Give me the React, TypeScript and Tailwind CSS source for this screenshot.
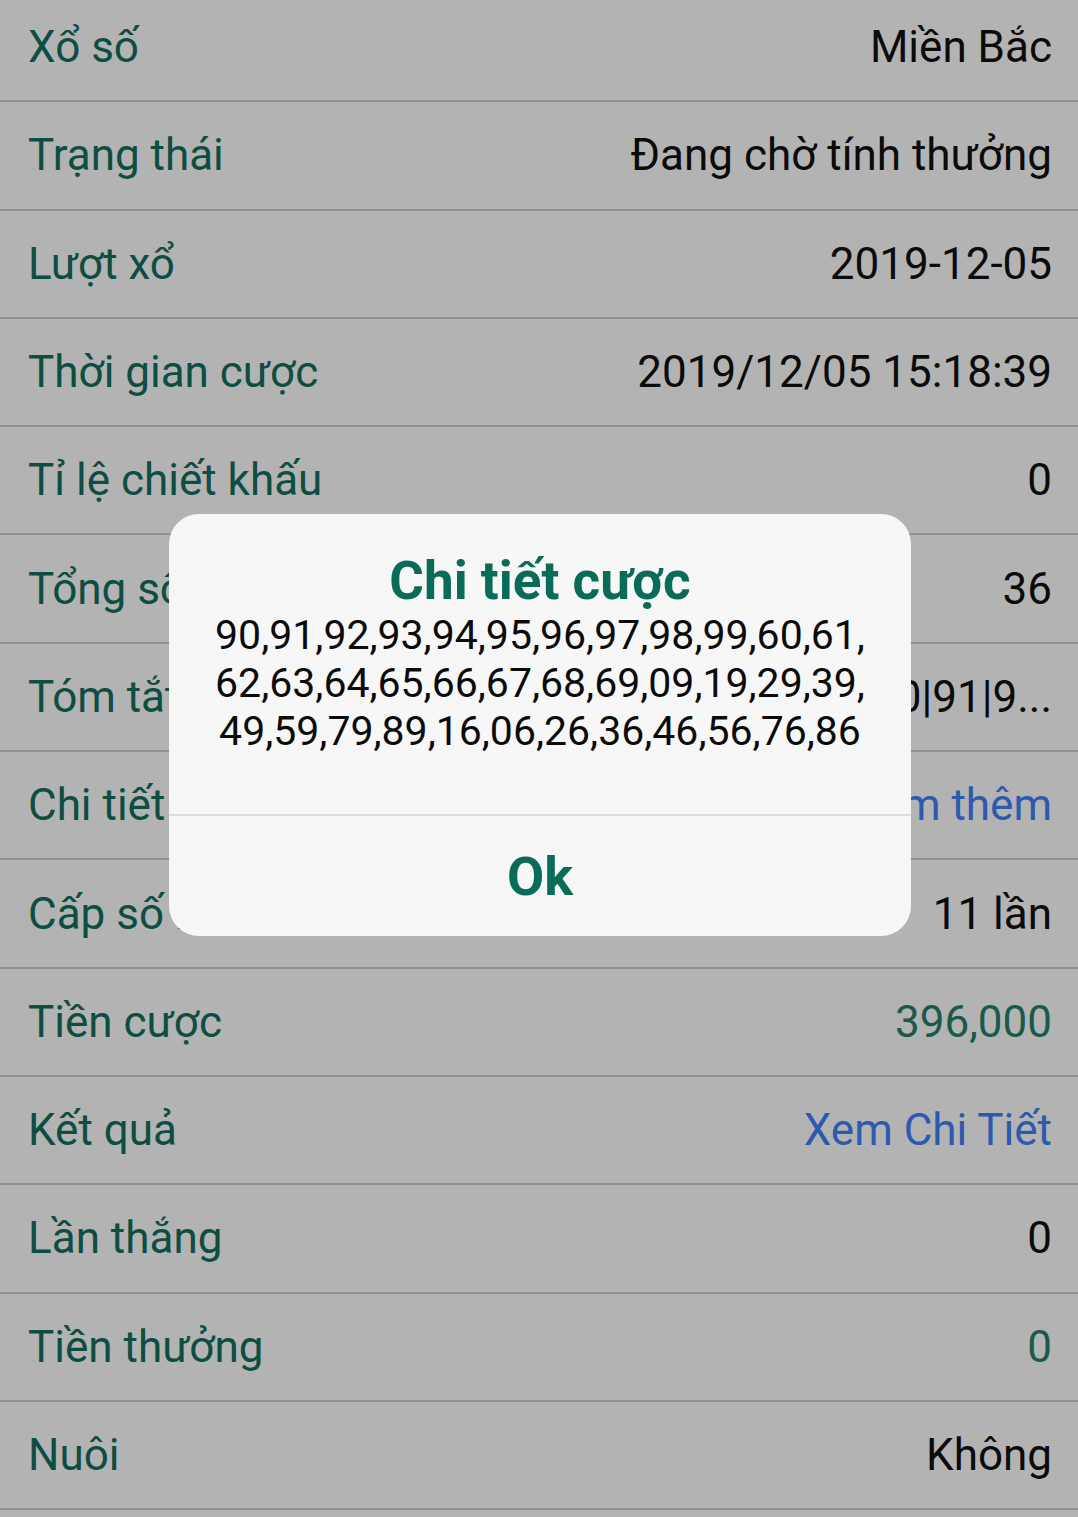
import React from 'react'

type Row = {
    label: string
    value: string
    tone?: 'black' | 'blue' | 'teal'
}

const rows: Row[] = [
    { label: 'Xổ số', value: 'Miền Bắc' },
    { label: 'Trạng thái', value: 'Đang chờ tính thưởng' },
    { label: 'Lượt xổ', value: '2019-12-05' },
    { label: 'Thời gian cược', value: '2019/12/05 15:18:39' },
    { label: 'Tỉ lệ chiết khấu', value: '0' },
    { label: 'Tổng số cược', value: '36' },
    { label: 'Tóm tắt cược', value: '90|91|9...' },
    { label: 'Chi tiết cược', value: 'Xem thêm', tone: 'blue' },
    { label: 'Cấp số nhân', value: '11 lần' },
    { label: 'Tiền cược', value: '396,000', tone: 'teal' },
    { label: 'Kết quả', value: 'Xem Chi Tiết', tone: 'blue' },
    { label: 'Lần thắng', value: '0' },
    { label: 'Tiền thưởng', value: '0', tone: 'teal' },
    { label: 'Nuôi', value: 'Không' },
]

const toneClass = {
    black: 'text-[#0b0b0b]',
    blue: 'text-[#2d5aae]',
    teal: 'text-[#1a5a4c]',
}

const lines = [
    '90,91,92,93,94,95,96,97,98,99,60,61,',
    '62,63,64,65,66,67,68,69,09,19,29,39,',
    '49,59,79,89,16,06,26,36,46,56,76,86',
]

const App = () => {
    return (
        <div className="relative h-[1517px] w-full overflow-hidden bg-[#b3b3b3] font-['Roboto',sans-serif]">
            <div className="-mt-[6px] flex flex-col">
                {rows.map((row) => (
                    <div
                        key={row.label}
                        className="flex h-[108.3px] shrink-0 items-center justify-between border-b-2 border-[#8f8f8f] pl-[28px] pr-[26px] text-[44px]"
                    >
                        <span className="text-[#0d4d42]">{row.label}</span>
                        <span className={toneClass[row.tone ?? 'black']}>{row.value}</span>
                    </div>
                ))}
                {/* next row, scrolled out of view */}
                <div className="h-[108px] shrink-0" />
            </div>

            {/* dialog */}
            <div className="absolute left-[169px] top-[514px] flex w-[742px] flex-col rounded-[30px] bg-[#f7f7f7]">
                <div className="flex flex-col items-center pt-[37px] pb-[59px]">
                    <p className="text-[53px] font-bold leading-[60px] text-[#0b6b59]">Chi tiết cược</p>
                    <div className="flex flex-col items-center text-[41px] leading-[48px] text-[#0b0b0b]">
                        {lines.map((l) => (
                            <span key={l} className="whitespace-nowrap">{l}</span>
                        ))}
                    </div>
                </div>
                <div className="h-[2px] bg-[#dedede]" />
                <div className="flex h-[120px] items-center justify-center">
                    <span className="text-[54px] font-bold text-[#0b6b59]">Ok</span>
                </div>
            </div>
        </div>
    )
}

export default App
